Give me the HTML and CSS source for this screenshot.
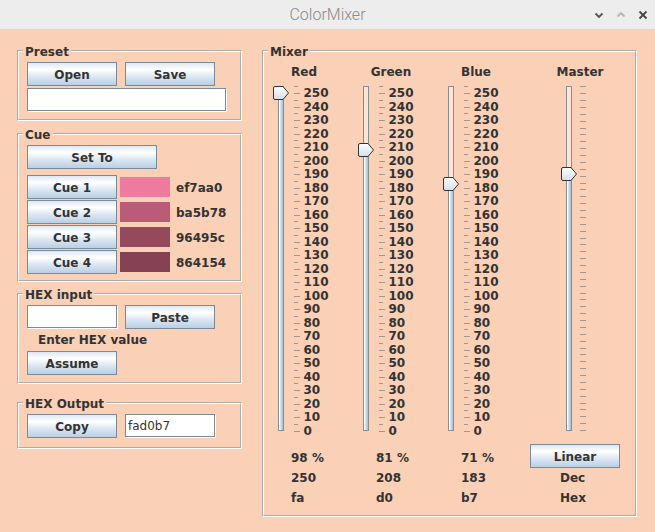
FILE: index.html
```html
<!DOCTYPE html>
<html>
<head>
<meta charset="utf-8">
<title>ColorMixer</title>
<link rel="stylesheet" href="styles.css">
</head>
<body>
<div class="titlebar">
  <div class="title">ColorMixer</div>
  <div class="winctl">
    <svg viewBox="0 0 12 12"><path d="M2.5 4.5 6 8 9.5 4.5" fill="none" stroke="#555" stroke-width="1.8"/></svg>
    <svg viewBox="0 0 12 12"><path d="M2.5 7.5 6 4 9.5 7.5" fill="none" stroke="#b4b4b4" stroke-width="1.8"/></svg>
    <svg viewBox="0 0 12 12"><path d="M2.5 2.5 9.5 9.5M9.5 2.5 2.5 9.5" fill="none" stroke="#444" stroke-width="1.8"/></svg>
  </div>
</div>
<div class="main">
  <div class="left">
    <fieldset class="panel preset">
      <legend>Preset</legend>
      <div class="pbody">
        <div class="row"><button class="btn w90">Open</button><button class="btn w90">Save</button></div>
        <input class="field wide" type="text">
      </div>
    </fieldset>
    <fieldset class="panel cuep">
      <legend>Cue</legend>
      <div class="pbody">
        <button class="btn setto">Set To</button>
        <div class="cues">
          <div class="cue"><button class="btn w90">Cue 1</button><span class="swatch sw1"></span><span class="code">ef7aa0</span></div>
          <div class="cue"><button class="btn w90">Cue 2</button><span class="swatch sw2"></span><span class="code">ba5b78</span></div>
          <div class="cue"><button class="btn w90">Cue 3</button><span class="swatch sw3"></span><span class="code">96495c</span></div>
          <div class="cue"><button class="btn w90">Cue 4</button><span class="swatch sw4"></span><span class="code">864154</span></div>
        </div>
      </div>
    </fieldset>
    <fieldset class="panel hexin">
      <legend>HEX input</legend>
      <div class="pbody">
        <div class="row"><input class="field w90" type="text"><button class="btn w90">Paste</button></div>
        <div class="hint">Enter HEX value</div>
        <button class="btn w90 assume">Assume</button>
      </div>
    </fieldset>
    <fieldset class="panel hexout">
      <legend>HEX Output</legend>
      <div class="pbody">
        <div class="row"><button class="btn w90">Copy</button><input class="field w90" type="text" value="fad0b7"></div>
      </div>
    </fieldset>
  </div>

  <fieldset class="panel mixer">
    <legend>Mixer</legend>
    <div class="mbody">
      <div class="col">
        <div class="hdr hdr-r">Red</div>
        <div class="slider">
          <div class="trackwrap">
            <div class="track"><div class="fill" style="height:337.7px"></div></div>
            <svg class="thumb" style="top:0.3px" viewBox="0 0 16 14"><defs><linearGradient id="tg1" x1="0" y1="0" x2="0" y2="1"><stop offset="0" stop-color="#ffffff"/><stop offset="1" stop-color="#d3dfec"/></linearGradient></defs><path d="M2 .5H10L15.5 7 10 13.5H2A1.5 1.5 0 0 1 .5 12V2A1.5 1.5 0 0 1 2 .5Z" fill="url(#tg1)" stroke="#333"/></svg>
          </div>
          <div class="ticks">
            <span class="t"></span><span class="t l">250</span><span class="t"></span><span class="t l">240</span><span class="t"></span><span class="t l">230</span><span class="t"></span><span class="t l">220</span><span class="t"></span><span class="t l">210</span><span class="t"></span><span class="t l">200</span><span class="t"></span><span class="t l">190</span><span class="t"></span><span class="t l">180</span><span class="t"></span><span class="t l">170</span><span class="t"></span><span class="t l">160</span><span class="t"></span><span class="t l">150</span><span class="t"></span><span class="t l">140</span><span class="t"></span><span class="t l">130</span><span class="t"></span><span class="t l">120</span><span class="t"></span><span class="t l">110</span><span class="t"></span><span class="t l">100</span><span class="t"></span><span class="t l">90</span><span class="t"></span><span class="t l">80</span><span class="t"></span><span class="t l">70</span><span class="t"></span><span class="t l">60</span><span class="t"></span><span class="t l">50</span><span class="t"></span><span class="t l">40</span><span class="t"></span><span class="t l">30</span><span class="t"></span><span class="t l">20</span><span class="t"></span><span class="t l">10</span><span class="t"></span><span class="t l">0</span>
          </div>
        </div>
        <div class="vals"><div>98 %</div><div>250</div><div>fa</div></div>
      </div>

      <div class="col">
        <div class="hdr">Green</div>
        <div class="slider">
          <div class="trackwrap">
            <div class="track"><div class="fill" style="height:281px"></div></div>
            <svg class="thumb" style="top:57px" viewBox="0 0 16 14"><defs><linearGradient id="tg2" x1="0" y1="0" x2="0" y2="1"><stop offset="0" stop-color="#ffffff"/><stop offset="1" stop-color="#d3dfec"/></linearGradient></defs><path d="M2 .5H10L15.5 7 10 13.5H2A1.5 1.5 0 0 1 .5 12V2A1.5 1.5 0 0 1 2 .5Z" fill="url(#tg2)" stroke="#333"/></svg>
          </div>
          <div class="ticks">
            <span class="t"></span><span class="t l">250</span><span class="t"></span><span class="t l">240</span><span class="t"></span><span class="t l">230</span><span class="t"></span><span class="t l">220</span><span class="t"></span><span class="t l">210</span><span class="t"></span><span class="t l">200</span><span class="t"></span><span class="t l">190</span><span class="t"></span><span class="t l">180</span><span class="t"></span><span class="t l">170</span><span class="t"></span><span class="t l">160</span><span class="t"></span><span class="t l">150</span><span class="t"></span><span class="t l">140</span><span class="t"></span><span class="t l">130</span><span class="t"></span><span class="t l">120</span><span class="t"></span><span class="t l">110</span><span class="t"></span><span class="t l">100</span><span class="t"></span><span class="t l">90</span><span class="t"></span><span class="t l">80</span><span class="t"></span><span class="t l">70</span><span class="t"></span><span class="t l">60</span><span class="t"></span><span class="t l">50</span><span class="t"></span><span class="t l">40</span><span class="t"></span><span class="t l">30</span><span class="t"></span><span class="t l">20</span><span class="t"></span><span class="t l">10</span><span class="t"></span><span class="t l">0</span>
          </div>
        </div>
        <div class="vals"><div>81 %</div><div>208</div><div>d0</div></div>
      </div>

      <div class="col">
        <div class="hdr">Blue</div>
        <div class="slider">
          <div class="trackwrap">
            <div class="track"><div class="fill" style="height:247.3px"></div></div>
            <svg class="thumb" style="top:90.7px" viewBox="0 0 16 14"><defs><linearGradient id="tg3" x1="0" y1="0" x2="0" y2="1"><stop offset="0" stop-color="#ffffff"/><stop offset="1" stop-color="#d3dfec"/></linearGradient></defs><path d="M2 .5H10L15.5 7 10 13.5H2A1.5 1.5 0 0 1 .5 12V2A1.5 1.5 0 0 1 2 .5Z" fill="url(#tg3)" stroke="#333"/></svg>
          </div>
          <div class="ticks">
            <span class="t"></span><span class="t l">250</span><span class="t"></span><span class="t l">240</span><span class="t"></span><span class="t l">230</span><span class="t"></span><span class="t l">220</span><span class="t"></span><span class="t l">210</span><span class="t"></span><span class="t l">200</span><span class="t"></span><span class="t l">190</span><span class="t"></span><span class="t l">180</span><span class="t"></span><span class="t l">170</span><span class="t"></span><span class="t l">160</span><span class="t"></span><span class="t l">150</span><span class="t"></span><span class="t l">140</span><span class="t"></span><span class="t l">130</span><span class="t"></span><span class="t l">120</span><span class="t"></span><span class="t l">110</span><span class="t"></span><span class="t l">100</span><span class="t"></span><span class="t l">90</span><span class="t"></span><span class="t l">80</span><span class="t"></span><span class="t l">70</span><span class="t"></span><span class="t l">60</span><span class="t"></span><span class="t l">50</span><span class="t"></span><span class="t l">40</span><span class="t"></span><span class="t l">30</span><span class="t"></span><span class="t l">20</span><span class="t"></span><span class="t l">10</span><span class="t"></span><span class="t l">0</span>
          </div>
        </div>
        <div class="vals"><div>71 %</div><div>183</div><div>b7</div></div>
      </div>

      <div class="col master">
        <div class="hdr hdr-m">Master</div>
        <div class="slider">
          <div class="trackwrap">
            <div class="track"><div class="fill" style="height:257.3px"></div></div>
            <svg class="thumb" style="top:80.7px" viewBox="0 0 16 14"><defs><linearGradient id="tg4" x1="0" y1="0" x2="0" y2="1"><stop offset="0" stop-color="#ffffff"/><stop offset="1" stop-color="#d3dfec"/></linearGradient></defs><path d="M2 .5H10L15.5 7 10 13.5H2A1.5 1.5 0 0 1 .5 12V2A1.5 1.5 0 0 1 2 .5Z" fill="url(#tg4)" stroke="#333"/></svg>
          </div>
          <div class="ticks mticks">
            <span class="t"></span><span class="t"></span><span class="t"></span><span class="t"></span><span class="t"></span><span class="t"></span><span class="t"></span><span class="t"></span><span class="t"></span><span class="t"></span><span class="t"></span><span class="t"></span><span class="t"></span><span class="t"></span><span class="t"></span><span class="t"></span><span class="t"></span><span class="t"></span><span class="t"></span><span class="t"></span><span class="t"></span><span class="t"></span><span class="t"></span><span class="t"></span><span class="t"></span><span class="t"></span><span class="t"></span><span class="t"></span><span class="t"></span><span class="t"></span><span class="t"></span><span class="t"></span><span class="t"></span><span class="t"></span><span class="t"></span><span class="t"></span><span class="t"></span><span class="t"></span><span class="t"></span><span class="t"></span><span class="t"></span><span class="t"></span><span class="t"></span><span class="t"></span><span class="t"></span><span class="t"></span><span class="t"></span><span class="t"></span><span class="t"></span><span class="t"></span><span class="t"></span>
          </div>
        </div>
        <button class="btn w90 linear">Linear</button>
        <div class="mvals"><div>Dec</div><div>Hex</div></div>
      </div>
    </div>
  </fieldset>
</div>
</body>
</html>
```

FILE: styles.css
```css
* { box-sizing: border-box; }
html, body { margin: 0; padding: 0; }
body {
  width: 655px;
  height: 532px;
  overflow: hidden;
  background: #fad0b7;
  font-family: "DejaVu Sans", "Liberation Sans", sans-serif;
  font-size: 12px;
  font-weight: bold;
  color: #333333;
}

/* title bar */
.titlebar {
  height: 29px;
  background: #ededed;
  display: grid;
  grid-template-columns: 1fr auto 1fr;
  align-items: center;
}
.title {
  grid-column: 2;
  font-family: Roboto, "Noto Sans", sans-serif;
  font-weight: 300;
  font-size: 16px;
  color: #8a8a8a;
  line-height: 29px;
}
.winctl {
  grid-column: 3;
  justify-self: end;
  display: flex;
  gap: 10px;
  padding-right: 6px;
}
.winctl svg { display: block; width: 12px; height: 12px; }

/* layout */
.main {
  display: flex;
  align-items: flex-start;
  padding: 15px 0 0 17px;
}
.left {
  width: 225px;
  display: flex;
  flex-direction: column;
}

/* titled panels */
.panel {
  margin: 0;
  padding: 0;
  min-width: 0;
  border: 2px groove #ffffff;
}
legend {
  margin-left: 4px;
  padding: 0 2px;
  height: 14px;
  line-height: 16px;
  font-weight: bold;
}
.pbody { padding: 4px 0 8px 8px; }
.cuep { margin-top: 6px; }
.cuep .pbody { padding-bottom: 6px; }
.hexin { margin-top: 5px; }
.hexin .pbody { padding-bottom: 7px; }
.hexout { margin-top: 12px; }
.hexout .pbody { padding-bottom: 9px; }

.row { display: flex; align-items: flex-start; gap: 8px; }

/* controls */
.btn {
  display: block;
  margin: 0;
  padding: 1px 0 0;
  height: 24px;
  border: 1px solid #7a8a99;
  border-radius: 0;
  background: linear-gradient(to bottom, #dde8f3 0%, #ffffff 30%, #dde8f3 60%, #b8cfe5 100%);
  font: bold 12px "DejaVu Sans", sans-serif;
  color: #333333;
  line-height: 22px;
  text-align: center;
  overflow: hidden;
}
.w90 { width: 90px; }
.setto { width: 130px; }

.field {
  display: block;
  margin: 0;
  height: 23px;
  padding: 1px 2px 0;
  border: 1px solid #7a8a99;
  box-shadow: 1px 1px 0 #ffffff;
  background: #ffffff;
  font: 12px "DejaVu Sans", sans-serif;
  color: #333333;
  outline: none;
}
.wide { width: 199px; margin-top: 2px; }

.cues { margin-top: 6px; display: flex; flex-direction: column; gap: 1px; }
.cue { display: flex; align-items: center; height: 24px; }
.swatch { display: block; width: 50px; height: 20px; margin-left: 3px; }
.sw1 { background: #ef7aa0; }
.sw2 { background: #ba5b78; }
.sw3 { background: #96495c; }
.sw4 { background: #864154; }
.code { margin-left: 6px; padding-top: 2px; }

.hint { margin-top: 3px; line-height: 16px; padding-left: 11px; }
.assume { margin-top: 3px; }

/* mixer */
.mixer { width: 375px; margin-left: 20px; }
.mbody {
  padding: 5px 0 7px 8px;
  display: grid;
  grid-template-columns: 85px 85px 85px 1fr;
  align-items: start;
}
.col { display: flex; flex-direction: column; }
.hdr { width: 68px; height: 18px; line-height: 18px; text-align: center; }
.hdr-r { width: 64px; }
.hdr-m { width: 106px; }

.slider { display: flex; margin-top: 2px; height: 351px; }
.trackwrap {
  position: relative;
  width: 6px;
  height: 345px;
  margin-top: 3px;
  margin-left: 6px;
}
.track {
  height: 100%;
  border: 1px solid #8c8c8c;
  background: rgba(255, 255, 255, 0.45);
  display: flex;
  flex-direction: column;
  justify-content: flex-end;
}
.fill {
  background: linear-gradient(to right, #ffffff 0%, #ffffff 20%, #c9daec 45%, #a7bfda 100%);
}
.thumb {
  position: absolute;
  left: -5px;
  width: 16px;
  height: 14px;
  display: block;
}

.ticks { display: flex; flex-direction: column; margin-left: 9.5px; padding-top: 0.4px; }
.t {
  display: flex;
  align-items: center;
  flex: none;
  height: 6.764px;
  line-height: 6.764px;
  white-space: nowrap;
}
.t::before {
  content: "";
  display: block;
  width: 4px;
  height: 1px;
  background: #a3978f;
}
.t.l::before { width: 6px; margin-right: 4px; }

.master .trackwrap { margin-left: 39px; }
.mticks { margin-left: 8px; }
.mticks .t { height: 6.882px; }
.mticks .t::before { width: 6px; }

.vals { margin-top: 14px; padding-left: 19px; line-height: 20px; }
.linear { margin: 10px 0 0 3px; }
.mvals { padding-left: 33px; line-height: 20px; }
```
